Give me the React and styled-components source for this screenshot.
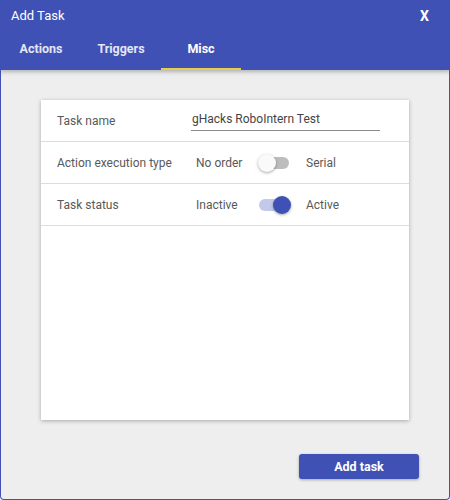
import React, { useState } from "react";
import styled, { createGlobalStyle } from "styled-components";

const Global = createGlobalStyle`
  html, body { margin: 0; padding: 0; }
  body { font-family: Roboto, "Noto Sans", sans-serif; background: #fff; }
`;

const Window = styled.div`
  width: 450px;
  height: 500px;
  box-sizing: border-box;
  border: 1px solid #3f51b5;
  border-top: none;
  border-bottom-left-radius: 4px;
  border-bottom-right-radius: 4px;
  background: #eeeeee;
  display: flex;
  flex-direction: column;
  overflow: hidden;
`;

const Header = styled.div`
  background: #3f51b5;
  margin: 0 -1px;
  box-shadow: 0 2px 4px rgba(0, 0, 0, 0.25);
  position: relative;
  z-index: 1;
`;

const TitleBar = styled.div`
  height: 31px;
  display: flex;
  align-items: center;
  justify-content: space-between;
  padding: 0 21px 0 11px;
  color: #fff;
  font-size: 13px;
`;

const Close = styled.span`
  font-weight: 700;
  font-size: 14px;
`;

const Tabs = styled.div`
  display: flex;
  padding-left: 1px;
  height: 39px;
`;

const Tab = styled.div`
  width: 80px;
  display: flex;
  align-items: center;
  justify-content: center;
  padding-bottom: 2px;
  box-sizing: border-box;
  color: ${(p) => (p.$active ? "#ffffff" : "#e3e6f5")};
  font-size: 12.5px;
  font-weight: 700;
  border-bottom: 2px solid ${(p) => (p.$active ? "#e8cc4e" : "transparent")};
`;

const Body = styled.div`
  flex: 1;
  display: flex;
  flex-direction: column;
  padding: 30px 40px 20px 40px;
`;

const Card = styled.div`
  background: #fff;
  height: 320px;
  box-shadow: 0 1px 4px rgba(0, 0, 0, 0.3);
`;

const Row = styled.div`
  height: 42px;
  box-sizing: border-box;
  border-bottom: 1px solid #dcdcdc;
  display: flex;
  align-items: center;
  padding-left: 16px;
  font-size: 12px;
  color: #595959;
`;

const Label = styled.div`
  width: 139px;
`;

const Input = styled.div`
  width: 188px;
  margin-left: -5px;
  padding: 0 0 4px 1px;
  border-bottom: 1px solid #8a8a8a;
  color: #444;
  font-size: 12px;
  margin-top: 2px;
`;

const SwitchText = styled.span`
  width: ${(p) => p.$w}px;
`;

const Track = styled.div`
  position: relative;
  width: 30px;
  height: 12px;
  border-radius: 6px;
  background: ${(p) => (p.$on ? "#c3c9e8" : "#bdbdbd")};
  margin: 0 17px 0 ${(p) => p.$ml}px;
`;

const Thumb = styled.div`
  position: absolute;
  top: -3px;
  left: ${(p) => (p.$on ? "14px" : "-1px")};
  width: 18px;
  height: 18px;
  border-radius: 50%;
  background: ${(p) => (p.$on ? "#3f51b5" : "#fafafa")};
  box-shadow: 0 1px 3px rgba(0, 0, 0, 0.35);
`;

const Footer = styled.div`
  display: flex;
  justify-content: flex-end;
  margin-top: 34px;
  margin-right: -10px;
`;

const Button = styled.button`
  width: 120px;
  height: 25px;
  border: none;
  border-radius: 3px;
  background: #3f51b5;
  color: #fff;
  font-family: Roboto, sans-serif;
  font-weight: 700;
  font-size: 12.5px;
  box-shadow: 0 1px 3px rgba(0, 0, 0, 0.3);
`;

function Toggle({ on, off, value, w, ml }) {
  return (
    <>
      <SwitchText $w={w}>{off}</SwitchText>
      <Track $on={value} $ml={ml}>
        <Thumb $on={value} />
      </Track>
      <span>{on}</span>
    </>
  );
}

export default function App() {
  const [tab] = useState("Misc");
  return (
    <>
      <Global />
      <Window>
        <Header>
          <TitleBar>
            <span>Add Task</span>
            <Close>X</Close>
          </TitleBar>
          <Tabs>
            {["Actions", "Triggers", "Misc"].map((t) => (
              <Tab key={t} $active={t === tab}>
                {t}
              </Tab>
            ))}
          </Tabs>
        </Header>
        <Body>
          <Card>
            <Row>
              <Label>Task name</Label>
              <Input>gHacks RoboIntern Test</Input>
            </Row>
            <Row>
              <Label>Action execution type</Label>
              <Toggle off="No order" on="Serial" value={false} w={55} ml={8} />
            </Row>
            <Row>
              <Label>Task status</Label>
              <Toggle off="Inactive" on="Active" value={true} w={55} ml={8} />
            </Row>
          </Card>
          <Footer>
            <Button>Add task</Button>
          </Footer>
        </Body>
      </Window>
    </>
  );
}
